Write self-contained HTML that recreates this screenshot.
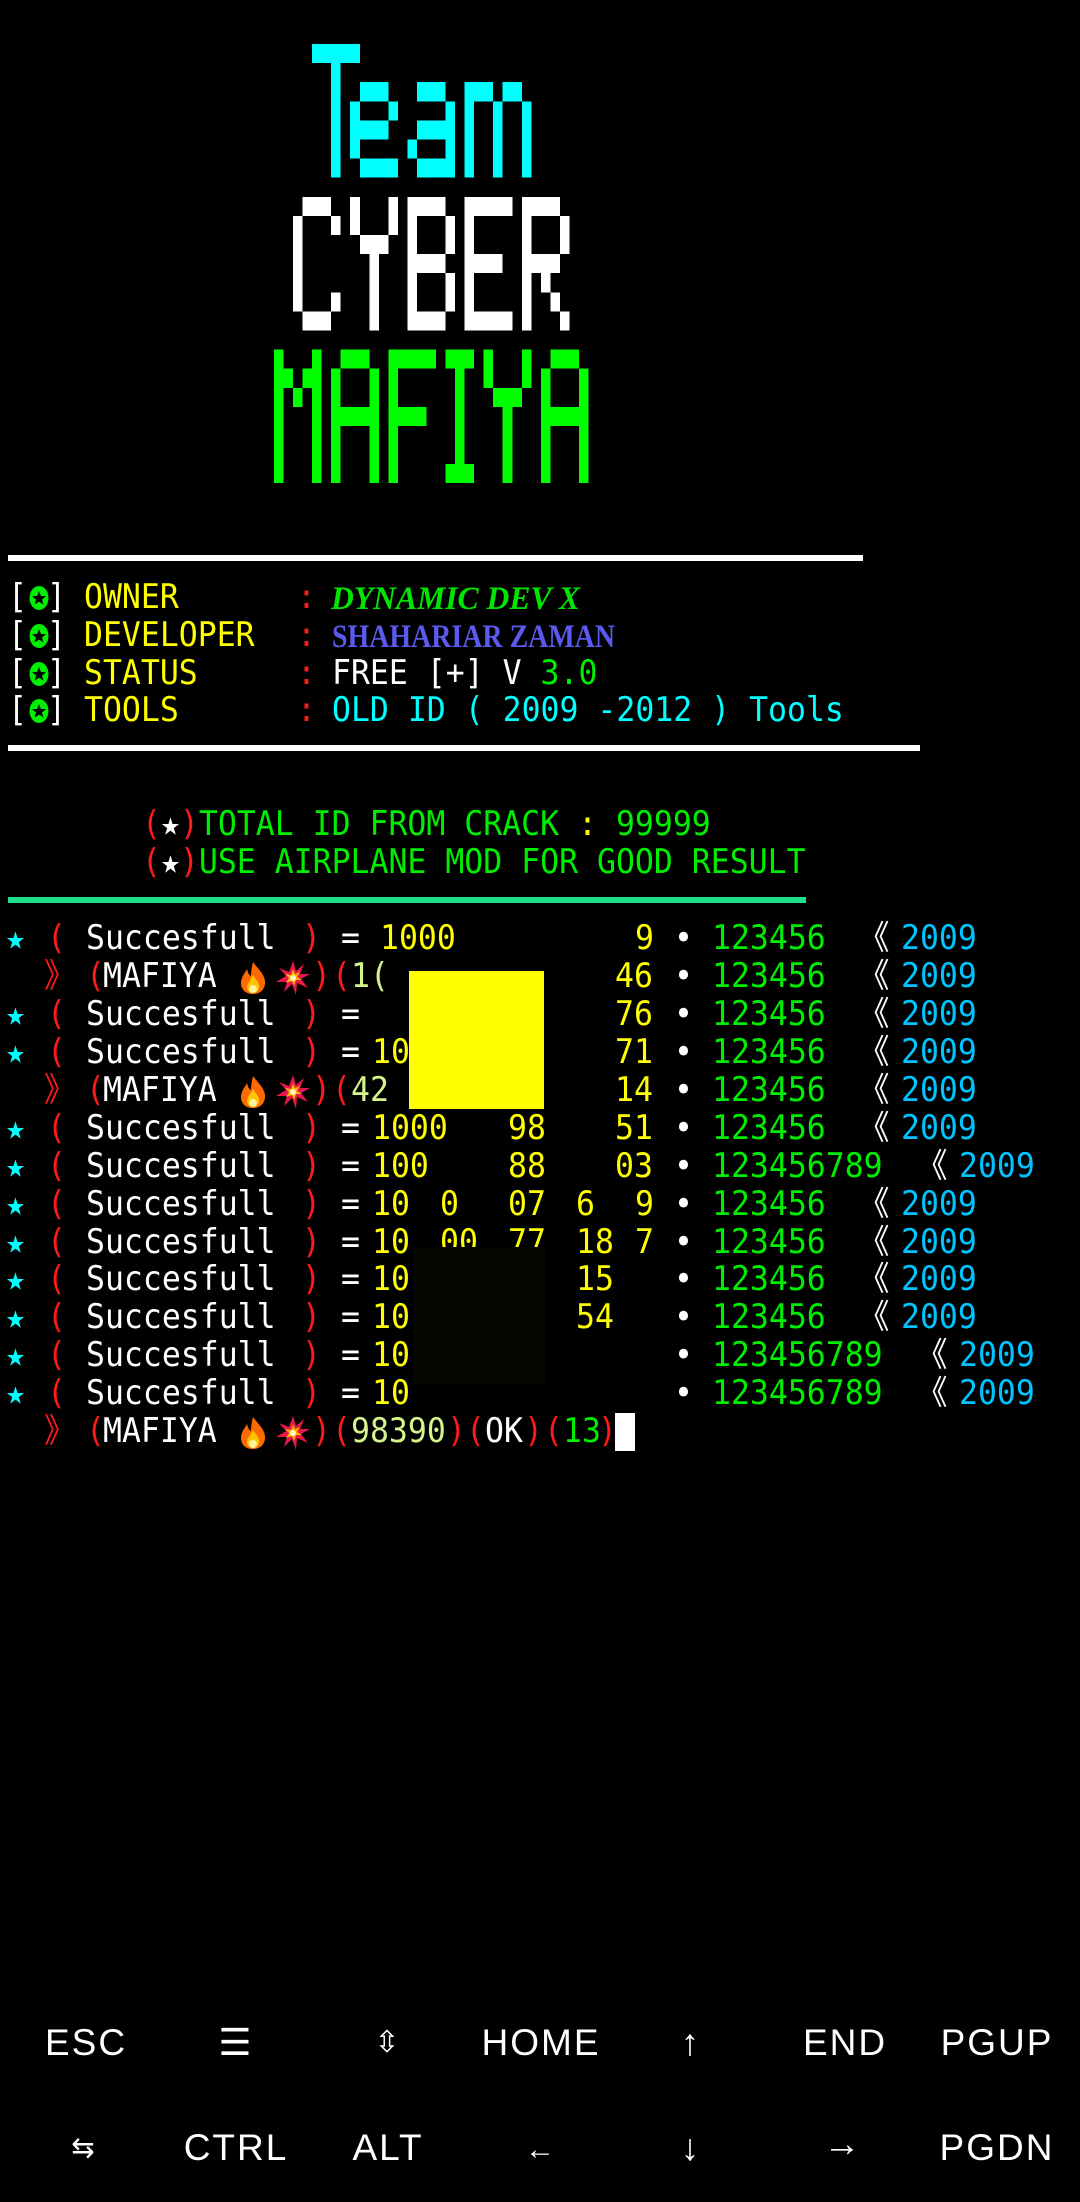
<!DOCTYPE html>
<html><head><meta charset="utf-8">
<style>
html,body{margin:0;padding:0;background:#000;}
body{width:1080px;height:2202px;position:relative;overflow:hidden;}
.r{position:absolute;left:0;height:38px;width:1080px;}
.m{position:absolute;top:-1px;white-space:pre;font-family:"DejaVu Sans Mono","Liberation Mono","Noto Sans CJK JP",monospace;font-size:33.5px;line-height:37.9px;transform:scaleX(0.94);transform-origin:0 0;}
.w{color:#fff}.y{color:#ffff00}.c{color:#00ffff}.g{color:#00ee00}.rd{color:#ff1a1a}.b{color:#00c4ff}.lg{color:#d4f58c}
.k{position:absolute;font-family:"Liberation Sans",sans-serif;font-size:37px;color:#fff;letter-spacing:2px;transform:translateX(-50%);white-space:pre;line-height:40px}
.rule{position:absolute;left:8px;height:6px;}
</style></head><body>

<svg style="position:absolute;left:274px;top:44px" width="314.5" height="439.3" viewBox="0 0 33 23" preserveAspectRatio="none" shape-rendering="crispEdges">
<g fill="#00ffff">
<rect x="4" y="0" width="5" height="1"/><rect x="6" y="1" width="1" height="6"/>
<rect x="9" y="2" width="3" height="1"/><rect x="8" y="3" width="1" height="3"/><rect x="12" y="3" width="1" height="1"/><rect x="8" y="4" width="4" height="1"/><rect x="9" y="6" width="4" height="1"/>
<rect x="15" y="2" width="3" height="1"/><rect x="18" y="3" width="1" height="4"/><rect x="15" y="4" width="3" height="1"/><rect x="14" y="5" width="1" height="1"/><rect x="15" y="6" width="3" height="1"/>
<rect x="20" y="2" width="3" height="1"/><rect x="24" y="2" width="2" height="1"/><rect x="20" y="3" width="1" height="4"/><rect x="23" y="3" width="1" height="4"/><rect x="26" y="3" width="1" height="4"/>
</g>
<g fill="#ffffff">
<rect x="3" y="8" width="3" height="1"/><rect x="2" y="9" width="1" height="5"/><rect x="6" y="9" width="1" height="1"/><rect x="6" y="13" width="1" height="1"/><rect x="3" y="14" width="3" height="1"/>
<rect x="8" y="8" width="1" height="2"/><rect x="12" y="8" width="1" height="2"/><rect x="9" y="10" width="3" height="1"/><rect x="10" y="11" width="1" height="4"/>
<rect x="14" y="8" width="1" height="7"/><rect x="15" y="8" width="3" height="1"/><rect x="18" y="9" width="1" height="2"/><rect x="15" y="11" width="3" height="1"/><rect x="18" y="12" width="1" height="2"/><rect x="15" y="14" width="3" height="1"/>
<rect x="20" y="8" width="1" height="7"/><rect x="21" y="8" width="4" height="1"/><rect x="21" y="11" width="3" height="1"/><rect x="21" y="14" width="4" height="1"/>
<rect x="26" y="8" width="1" height="7"/><rect x="27" y="8" width="3" height="1"/><rect x="30" y="9" width="1" height="2"/><rect x="27" y="11" width="3" height="1"/><rect x="28" y="12" width="1" height="1"/><rect x="29" y="13" width="1" height="1"/><rect x="30" y="14" width="1" height="1"/>
</g>
<g fill="#00ff00">
<rect x="0" y="16" width="1" height="7"/><rect x="1" y="17" width="1" height="1"/><rect x="3" y="17" width="1" height="1"/><rect x="2" y="18" width="1" height="1"/><rect x="4" y="16" width="1" height="7"/>
<rect x="7" y="16" width="3" height="1"/><rect x="6" y="17" width="1" height="6"/><rect x="10" y="17" width="1" height="6"/><rect x="7" y="19" width="3" height="1"/>
<rect x="12" y="16" width="5" height="1"/><rect x="12" y="17" width="1" height="6"/><rect x="13" y="19" width="3" height="1"/>
<rect x="18" y="16" width="3" height="1"/><rect x="19" y="17" width="1" height="5"/><rect x="18" y="22" width="3" height="1"/>
<rect x="22" y="16" width="1" height="2"/><rect x="26" y="16" width="1" height="2"/><rect x="23" y="18" width="3" height="1"/><rect x="24" y="19" width="1" height="4"/>
<rect x="29" y="16" width="3" height="1"/><rect x="28" y="17" width="1" height="6"/><rect x="32" y="17" width="1" height="6"/><rect x="29" y="19" width="3" height="1"/>
</g>
</svg>

<div class="rule" style="top:555px;width:855px;background:#fff"></div>
<div class="rule" style="top:745px;width:912px;background:#fff"></div>
<div class="rule" style="top:897px;width:798px;background:#1ee08a"></div>

<div class="r" style="top:579px">
<span class="m w" style="left:8px">[</span><svg style="position:absolute;left:27px;top:6px" width="24" height="26" viewBox="0 0 24 26"><ellipse cx="12" cy="13" rx="9.5" ry="12" fill="#00ee00"/><polygon points="12,6 13.9,11 19,11.2 15,14.5 16.4,19.5 12,16.6 7.6,19.5 9,14.5 5,11.2 10.1,11" fill="#000"/></svg><span class="m w" style="left:47px">]</span>
<span class="m y" style="left:84px">OWNER</span><span class="m rd" style="left:297px">:</span>
<svg style="position:absolute;left:331px;top:0" width="260" height="38"><text x="0" y="30" textLength="249" lengthAdjust="spacingAndGlyphs" font-family="Liberation Serif" font-weight="bold" font-style="italic" font-size="33" fill="#00e600">DYNAMIC  DEV  X</text></svg>
</div>
<div class="r" style="top:617px">
<span class="m w" style="left:8px">[</span><svg style="position:absolute;left:27px;top:6px" width="24" height="26" viewBox="0 0 24 26"><ellipse cx="12" cy="13" rx="9.5" ry="12" fill="#00ee00"/><polygon points="12,6 13.9,11 19,11.2 15,14.5 16.4,19.5 12,16.6 7.6,19.5 9,14.5 5,11.2 10.1,11" fill="#000"/></svg><span class="m w" style="left:47px">]</span>
<span class="m y" style="left:84px">DEVELOPER</span><span class="m rd" style="left:297px">:</span>
<svg style="position:absolute;left:332px;top:0" width="300" height="38"><text x="0" y="30" textLength="283" lengthAdjust="spacingAndGlyphs" font-family="Liberation Serif" font-weight="bold" font-size="33" fill="#5a5af0">SHAHARIAR  ZAMAN</text></svg>
</div>
<div class="r" style="top:655px">
<span class="m w" style="left:8px">[</span><svg style="position:absolute;left:27px;top:6px" width="24" height="26" viewBox="0 0 24 26"><ellipse cx="12" cy="13" rx="9.5" ry="12" fill="#00ee00"/><polygon points="12,6 13.9,11 19,11.2 15,14.5 16.4,19.5 12,16.6 7.6,19.5 9,14.5 5,11.2 10.1,11" fill="#000"/></svg><span class="m w" style="left:47px">]</span>
<span class="m y" style="left:84px">STATUS</span><span class="m rd" style="left:297px">:</span>
<span class="m w" style="left:332px">FREE [+] V <span class="g">3.0</span></span>
</div>
<div class="r" style="top:692px">
<span class="m w" style="left:8px">[</span><svg style="position:absolute;left:27px;top:6px" width="24" height="26" viewBox="0 0 24 26"><ellipse cx="12" cy="13" rx="9.5" ry="12" fill="#00ee00"/><polygon points="12,6 13.9,11 19,11.2 15,14.5 16.4,19.5 12,16.6 7.6,19.5 9,14.5 5,11.2 10.1,11" fill="#000"/></svg><span class="m w" style="left:47px">]</span>
<span class="m y" style="left:84px">TOOLS</span><span class="m rd" style="left:297px">:</span>
<span class="m c" style="left:332px">OLD ID ( 2009 -2012 ) Tools</span>
</div>

<div class="r" style="top:806px"><span class="m" style="left:142px"><span class="rd">(</span><span class="w">★</span><span class="rd">)</span><span class="g">TOTAL ID FROM CRACK <span class="y">:</span> 99999</span></span></div>
<div class="r" style="top:844px"><span class="m" style="left:142px"><span class="rd">(</span><span class="w">★</span><span class="rd">)</span><span class="g">USE AIRPLANE MOD FOR GOOD RESULT</span></span></div>

<div class="r" style="top:920px"><span class="m c" style="left:6px">★</span><span class="m rd" style="left:47px">(</span><span class="m w" style="left:86px">Succesfull</span><span class="m rd" style="left:302px">)</span><span class="m w" style="left:341px">=</span><span class="m y" style="left:380px">1000</span><span class="m y" style="left:635px">9</span><span class="m w" style="left:674px">•</span><span class="m g" style="left:712px">123456</span><span class="m w" style="left:858px">《</span><span class="m b" style="left:901px">2009</span></div>

<div class="r" style="top:958px"><span class="m rd" style="left:44px">》</span><span class="m rd" style="left:86px">(</span><span class="m w" style="left:103px">MAFIYA</span>
<svg style="position:absolute;left:238px;top:3px" width="30" height="34" viewBox="0 0 30 34"><path d="M15 1 C20 8 28 14 27 23 C26 30 21 33 15 33 C8 33 3 29 3 22 C3 16 7 12 9 8 C10 12 11 14 13 15 C13 10 14 5 15 1Z" fill="#ff6a00"/><path d="M15 14 C18 19 22 22 21 27 C20 31 17 32 15 32 C12 32 9 30 9 26 C9 22 13 19 15 14Z" fill="#ffc400"/><ellipse cx="15" cy="28" rx="4" ry="4" fill="#fff3a0"/></svg>
<svg style="position:absolute;left:276px;top:3px" width="34" height="34" viewBox="0 0 34 34"><polygon points="17,0 20,10 28,3 24,13 34,13 25,18 32,27 21,22 20,34 16,23 8,31 11,21 0,21 10,15 3,7 13,11" fill="#e8174a"/><polygon points="17,8 19,13 24,11 21,16 26,19 20,19 18,25 16,20 10,22 13,17 9,13 15,14" fill="#ffb000"/><circle cx="17" cy="17" r="3" fill="#fff7c0"/></svg>
<span class="m rd" style="left:312px">)</span><span class="m rd" style="left:332px">(</span><span class="m lg" style="left:351px">1(</span><span class="m y" style="left:615px">46</span><span class="m w" style="left:674px">•</span><span class="m g" style="left:712px">123456</span><span class="m w" style="left:858px">《</span><span class="m b" style="left:901px">2009</span></div>

<div class="r" style="top:996px"><span class="m c" style="left:6px">★</span><span class="m rd" style="left:47px">(</span><span class="m w" style="left:86px">Succesfull</span><span class="m rd" style="left:302px">)</span><span class="m w" style="left:341px">=</span><span class="m y" style="left:615px">76</span><span class="m w" style="left:674px">•</span><span class="m g" style="left:712px">123456</span><span class="m w" style="left:858px">《</span><span class="m b" style="left:901px">2009</span></div>

<div class="r" style="top:1034px"><span class="m c" style="left:6px">★</span><span class="m rd" style="left:47px">(</span><span class="m w" style="left:86px">Succesfull</span><span class="m rd" style="left:302px">)</span><span class="m w" style="left:341px">=</span><span class="m y" style="left:372px">10</span><span class="m y" style="left:615px">71</span><span class="m w" style="left:674px">•</span><span class="m g" style="left:712px">123456</span><span class="m w" style="left:858px">《</span><span class="m b" style="left:901px">2009</span></div>

<div class="r" style="top:1072px"><span class="m rd" style="left:44px">》</span><span class="m rd" style="left:86px">(</span><span class="m w" style="left:103px">MAFIYA</span>
<svg style="position:absolute;left:238px;top:3px" width="30" height="34" viewBox="0 0 30 34"><path d="M15 1 C20 8 28 14 27 23 C26 30 21 33 15 33 C8 33 3 29 3 22 C3 16 7 12 9 8 C10 12 11 14 13 15 C13 10 14 5 15 1Z" fill="#ff6a00"/><path d="M15 14 C18 19 22 22 21 27 C20 31 17 32 15 32 C12 32 9 30 9 26 C9 22 13 19 15 14Z" fill="#ffc400"/><ellipse cx="15" cy="28" rx="4" ry="4" fill="#fff3a0"/></svg>
<svg style="position:absolute;left:276px;top:3px" width="34" height="34" viewBox="0 0 34 34"><polygon points="17,0 20,10 28,3 24,13 34,13 25,18 32,27 21,22 20,34 16,23 8,31 11,21 0,21 10,15 3,7 13,11" fill="#e8174a"/><polygon points="17,8 19,13 24,11 21,16 26,19 20,19 18,25 16,20 10,22 13,17 9,13 15,14" fill="#ffb000"/><circle cx="17" cy="17" r="3" fill="#fff7c0"/></svg>
<span class="m rd" style="left:312px">)</span><span class="m rd" style="left:332px">(</span><span class="m lg" style="left:351px">42</span><span class="m y" style="left:615px">14</span><span class="m w" style="left:674px">•</span><span class="m g" style="left:712px">123456</span><span class="m w" style="left:858px">《</span><span class="m b" style="left:901px">2009</span></div>

<div class="r" style="top:1110px"><span class="m c" style="left:6px">★</span><span class="m rd" style="left:47px">(</span><span class="m w" style="left:86px">Succesfull</span><span class="m rd" style="left:302px">)</span><span class="m w" style="left:341px">=</span><span class="m y" style="left:372px">1000</span><span class="m y" style="left:508px">98</span><span class="m y" style="left:615px">51</span><span class="m w" style="left:674px">•</span><span class="m g" style="left:712px">123456</span><span class="m w" style="left:858px">《</span><span class="m b" style="left:901px">2009</span></div>

<div class="r" style="top:1148px"><span class="m c" style="left:6px">★</span><span class="m rd" style="left:47px">(</span><span class="m w" style="left:86px">Succesfull</span><span class="m rd" style="left:302px">)</span><span class="m w" style="left:341px">=</span><span class="m y" style="left:372px">100</span><span class="m y" style="left:508px">88</span><span class="m y" style="left:615px">03</span><span class="m w" style="left:674px">•</span><span class="m g" style="left:712px">123456789</span><span class="m w" style="left:916px">《</span><span class="m b" style="left:959px">2009</span></div>

<div class="r" style="top:1186px"><span class="m c" style="left:6px">★</span><span class="m rd" style="left:47px">(</span><span class="m w" style="left:86px">Succesfull</span><span class="m rd" style="left:302px">)</span><span class="m w" style="left:341px">=</span><span class="m y" style="left:372px">10</span><span class="m y" style="left:440px">0</span><span class="m y" style="left:508px">07</span><span class="m y" style="left:576px">6</span><span class="m y" style="left:635px">9</span><span class="m w" style="left:674px">•</span><span class="m g" style="left:712px">123456</span><span class="m w" style="left:858px">《</span><span class="m b" style="left:901px">2009</span></div>

<div class="r" style="top:1224px"><span class="m c" style="left:6px">★</span><span class="m rd" style="left:47px">(</span><span class="m w" style="left:86px">Succesfull</span><span class="m rd" style="left:302px">)</span><span class="m w" style="left:341px">=</span><span class="m y" style="left:372px">10</span><span class="m y" style="left:440px">00</span><span class="m y" style="left:508px">77</span><span class="m y" style="left:576px">18</span><span class="m y" style="left:635px">7</span><span class="m w" style="left:674px">•</span><span class="m g" style="left:712px">123456</span><span class="m w" style="left:858px">《</span><span class="m b" style="left:901px">2009</span></div>

<div class="r" style="top:1261px"><span class="m c" style="left:6px">★</span><span class="m rd" style="left:47px">(</span><span class="m w" style="left:86px">Succesfull</span><span class="m rd" style="left:302px">)</span><span class="m w" style="left:341px">=</span><span class="m y" style="left:372px">10</span><span class="m y" style="left:576px">15</span><span class="m w" style="left:674px">•</span><span class="m g" style="left:712px">123456</span><span class="m w" style="left:858px">《</span><span class="m b" style="left:901px">2009</span></div>

<div class="r" style="top:1299px"><span class="m c" style="left:6px">★</span><span class="m rd" style="left:47px">(</span><span class="m w" style="left:86px">Succesfull</span><span class="m rd" style="left:302px">)</span><span class="m w" style="left:341px">=</span><span class="m y" style="left:372px">10</span><span class="m y" style="left:576px">54</span><span class="m w" style="left:674px">•</span><span class="m g" style="left:712px">123456</span><span class="m w" style="left:858px">《</span><span class="m b" style="left:901px">2009</span></div>

<div class="r" style="top:1337px"><span class="m c" style="left:6px">★</span><span class="m rd" style="left:47px">(</span><span class="m w" style="left:86px">Succesfull</span><span class="m rd" style="left:302px">)</span><span class="m w" style="left:341px">=</span><span class="m y" style="left:372px">10</span><span class="m w" style="left:674px">•</span><span class="m g" style="left:712px">123456789</span><span class="m w" style="left:916px">《</span><span class="m b" style="left:959px">2009</span></div>

<div class="r" style="top:1375px"><span class="m c" style="left:6px">★</span><span class="m rd" style="left:47px">(</span><span class="m w" style="left:86px">Succesfull</span><span class="m rd" style="left:302px">)</span><span class="m w" style="left:341px">=</span><span class="m y" style="left:372px">10</span><span class="m w" style="left:674px">•</span><span class="m g" style="left:712px">123456789</span><span class="m w" style="left:916px">《</span><span class="m b" style="left:959px">2009</span></div>

<div class="r" style="top:1413px"><span class="m rd" style="left:44px">》</span><span class="m rd" style="left:86px">(</span><span class="m w" style="left:103px">MAFIYA</span>
<svg style="position:absolute;left:238px;top:3px" width="30" height="34" viewBox="0 0 30 34"><path d="M15 1 C20 8 28 14 27 23 C26 30 21 33 15 33 C8 33 3 29 3 22 C3 16 7 12 9 8 C10 12 11 14 13 15 C13 10 14 5 15 1Z" fill="#ff6a00"/><path d="M15 14 C18 19 22 22 21 27 C20 31 17 32 15 32 C12 32 9 30 9 26 C9 22 13 19 15 14Z" fill="#ffc400"/><ellipse cx="15" cy="28" rx="4" ry="4" fill="#fff3a0"/></svg>
<svg style="position:absolute;left:276px;top:3px" width="34" height="34" viewBox="0 0 34 34"><polygon points="17,0 20,10 28,3 24,13 34,13 25,18 32,27 21,22 20,34 16,23 8,31 11,21 0,21 10,15 3,7 13,11" fill="#e8174a"/><polygon points="17,8 19,13 24,11 21,16 26,19 20,19 18,25 16,20 10,22 13,17 9,13 15,14" fill="#ffb000"/><circle cx="17" cy="17" r="3" fill="#fff7c0"/></svg>
<span class="m rd" style="left:312px">)</span><span class="m rd" style="left:332px">(</span><span class="m lg" style="left:351px">98390</span><span class="m rd" style="left:447px">)</span><span class="m rd" style="left:466px">(</span><span class="m w" style="left:485px">OK</span><span class="m rd" style="left:524px">)</span><span class="m rd" style="left:544px">(</span><span class="m g" style="left:563px">13</span><span class="m rd" style="left:598px">)</span>
<div style="position:absolute;left:615px;top:0;width:20px;height:38px;background:#fff"></div></div>

<div style="position:absolute;left:409px;top:971px;width:135px;height:138px;background:#ffff00"></div>
<div style="position:absolute;left:413px;top:1247px;width:132px;height:138px;background:#060600"></div>

<div class="k" style="left:86px;top:2023px">ESC</div>
<div class="k" style="left:236px;top:2023px">☰</div>
<div class="k" style="left:388px;top:2023px;font-size:30px">⇳</div>
<div class="k" style="left:541px;top:2023px">HOME</div>
<div class="k" style="left:691px;top:2023px">↑</div>
<div class="k" style="left:845px;top:2023px">END</div>
<div class="k" style="left:997px;top:2023px">PGUP</div>
<div class="k" style="left:84px;top:2128px;font-size:28px">⇆</div>
<div class="k" style="left:236px;top:2128px">CTRL</div>
<div class="k" style="left:388px;top:2128px">ALT</div>
<div class="k" style="left:541px;top:2130px;font-size:30px">←</div>
<div class="k" style="left:691px;top:2128px">↓</div>
<div class="k" style="left:843px;top:2124px">→</div>
<div class="k" style="left:997px;top:2128px">PGDN</div>
</body></html>
